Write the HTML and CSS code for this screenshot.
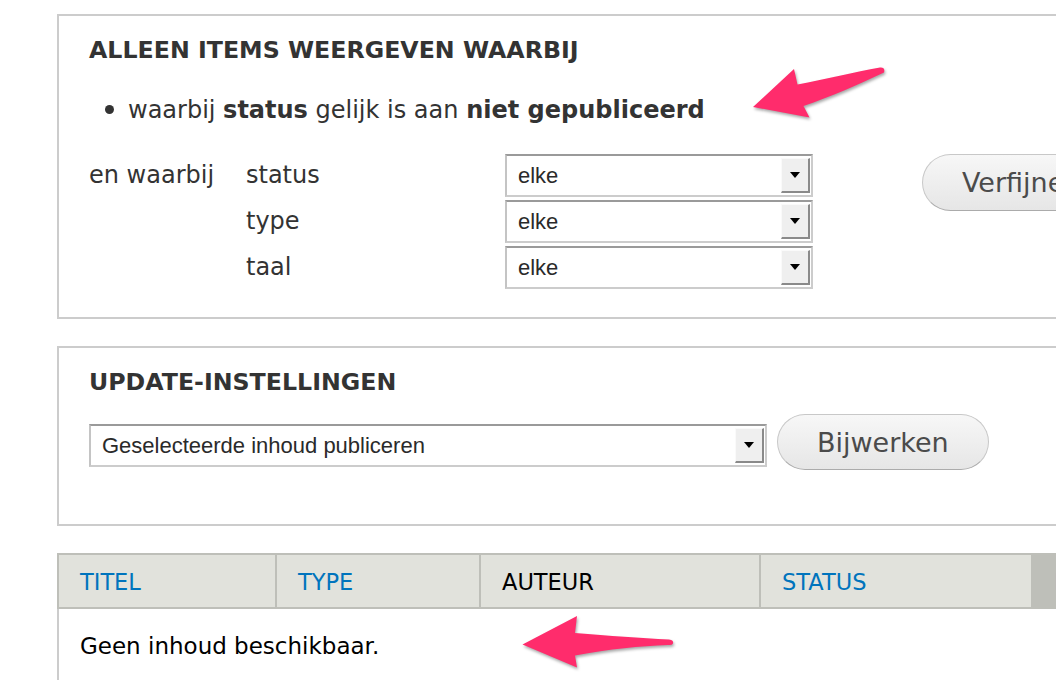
FILE: index.html
```html
<!DOCTYPE html>
<html lang="nl">
<head>
<meta charset="utf-8">
<title>Inhoud</title>
<link rel="stylesheet" href="styles.css">
</head>
<body>
<div class="page">
  <section class="box box-filter">
    <h2 class="box-title">ALLEEN ITEMS WEERGEVEN WAARBIJ</h2>
    <ul class="current-filters">
      <li>waarbij <strong>status</strong> gelijk is aan <strong>niet gepubliceerd</strong></li>
    </ul>
    <div class="filter-row">
      <div class="and-label">en waarbij</div>
      <div class="filter-fields">
        <label class="field-label">status</label>
        <div class="select"><span class="select-value">elke</span><span class="select-arrow"><i class="tri"></i></span></div>
        <label class="field-label">type</label>
        <div class="select"><span class="select-value">elke</span><span class="select-arrow"><i class="tri"></i></span></div>
        <label class="field-label">taal</label>
        <div class="select"><span class="select-value">elke</span><span class="select-arrow"><i class="tri"></i></span></div>
      </div>
      <div class="filter-actions">
        <button class="btn" type="button">Verfijnen</button>
      </div>
    </div>
  </section>

  <section class="box box-update">
    <h2 class="box-title">UPDATE-INSTELLINGEN</h2>
    <div class="update-row">
      <div class="select select-wide"><span class="select-value">Geselecteerde inhoud publiceren</span><span class="select-arrow"><i class="tri"></i></span></div>
      <button class="btn" type="button">Bijwerken</button>
    </div>
  </section>

  <div class="table" role="table">
    <div class="th" role="columnheader"><a href="#">TITEL</a></div>
    <div class="th" role="columnheader"><a href="#">TYPE</a></div>
    <div class="th th-plain" role="columnheader">AUTEUR</div>
    <div class="th" role="columnheader"><a href="#">STATUS</a></div>
    <div class="th th-active" role="columnheader"><a href="#">BIJGEWERKT</a></div>
    <div class="td-empty" role="cell">Geen inhoud beschikbaar.</div>
  </div>
</div>

<svg class="annotations" width="1056" height="680" viewBox="0 0 1056 680" aria-hidden="true">
  <path class="arrow" d="M753,107 L794,69 L797.5,84.5 C825,79 855,72 880,67.5 Q885.5,67 884,72.5 C860,84 830,97 803.5,106 L809.5,117.5 Z"/>
  <path class="arrow" d="M522.5,644.5 L577,616 L575,633 C610,636 640,638 669,639.5 Q674,640 673,643.5 Q672,645.5 668,645 C640,646 610,649 575,655.5 L577,667.5 Z"/>
</svg>
</body>
</html>
```

FILE: styles.css
```css
html, body {
  margin: 0;
  padding: 0;
  overflow: hidden;
  background: #fff;
}

body {
  font-family: "DejaVu Sans", "Liberation Sans", sans-serif;
  color: #333;
  width: 1056px;
  height: 680px;
}

.page {
  padding: 14px 0 0 57px;
  width: 1300px;
}

.box {
  box-sizing: border-box;
  width: 1200px;
  border: 2px solid #cccccc;
  padding: 20px 30px 28px 30px;
}

.box-update {
  margin-top: 27px;
  padding-bottom: 54px;
}

.box-title {
  margin: 0;
  font-size: 23.7px;
  line-height: 28px;
  font-weight: bold;
  color: #333;
}

.current-filters {
  list-style: none;
  margin: 31px 0 0 0;
  padding: 0 0 0 16px;
  font-size: 24px;
  line-height: 30px;
}

.current-filters li::before {
  content: "";
  display: inline-block;
  width: 9px;
  height: 9px;
  border-radius: 50%;
  background: #333;
  margin-right: 14px;
  vertical-align: 4px;
}

.current-filters strong {
  font-weight: bold;
}

.filter-row {
  display: flex;
  align-items: flex-start;
  margin-top: 29px;
}

.and-label {
  width: 157px;
  font-size: 24px;
  line-height: 43px;
}

.filter-fields {
  display: grid;
  grid-template-columns: 259px 308px;
  row-gap: 3px;
}

.field-label {
  font-size: 24px;
  line-height: 43px;
}

.select {
  box-sizing: border-box;
  display: flex;
  height: 43px;
  border: 2px solid #cccccc;
  border-top-color: #9a9a9a;
  border-left-color: #c4c4c4;
  background: #fff;
  font-family: "Liberation Sans", Arial, sans-serif;
  font-size: 22px;
  color: #2a2a2a;
}

.select-value {
  flex: 1;
  padding-left: 11px;
  line-height: 39px;
  white-space: nowrap;
}

.select-arrow {
  box-sizing: border-box;
  width: 29px;
  margin: 2px 1px 2px 0;
  background: #efefef;
  border-top: 1px solid #fafafa;
  border-left: 1px solid #fafafa;
  border-right: 2px solid #8a8a8a;
  border-bottom: 2px solid #8a8a8a;
  display: flex;
  align-items: center;
  justify-content: center;
}

.tri {
  display: block;
  width: 0;
  height: 0;
  border-left: 5px solid transparent;
  border-right: 5px solid transparent;
  border-top: 6px solid #000;
}

.filter-actions {
  margin-left: 109px;
}

.btn {
  box-sizing: border-box;
  height: 57px;
  padding: 0 39px;
  border: 1px solid #c8c8c8;
  border-bottom-color: #ababab;
  border-radius: 30px;
  background: linear-gradient(#f7f7f7, #e6e6e6);
  font-family: "DejaVu Sans", sans-serif;
  font-size: 27px;
  color: #4b4b4b;
  white-space: nowrap;
}

.update-row {
  display: flex;
  align-items: flex-start;
  margin-top: 18px;
}

.select-wide {
  width: 678px;
  margin-top: 10px;
}

.update-row .btn {
  margin-left: 10px;
  height: 56px;
}

.table {
  margin-top: 27px;
  display: grid;
  grid-template-columns: 218px 204px 280px 272px 300px;
  width: 1274px;
}

.th {
  box-sizing: border-box;
  border-top: 2px solid #bebfb9;
  border-bottom: 2px solid #bebfb9;
  border-left: 2px solid #bebfb9;
  background: #e1e2dc;
  padding: 2px 0 0 21px;
  font-size: 22.5px;
  line-height: 50px;
  white-space: nowrap;
  overflow: hidden;
}

.th a {
  color: #0074bd;
  text-decoration: none;
}

.th-plain {
  color: #000;
}

.th-active {
  background: #bebfb9;
}

.td-empty {
  grid-column: 1 / -1;
  border-left: 2px solid #cccccc;
  padding: 22px 21px;
  font-size: 23px;
  line-height: 30px;
  color: #000;
}

.annotations {
  position: absolute;
  top: 0;
  left: 0;
  pointer-events: none;
}

.arrow {
  fill: #ff2c6c;
  filter: drop-shadow(1px 2px 1.5px rgba(0, 0, 0, 0.35));
}
```
